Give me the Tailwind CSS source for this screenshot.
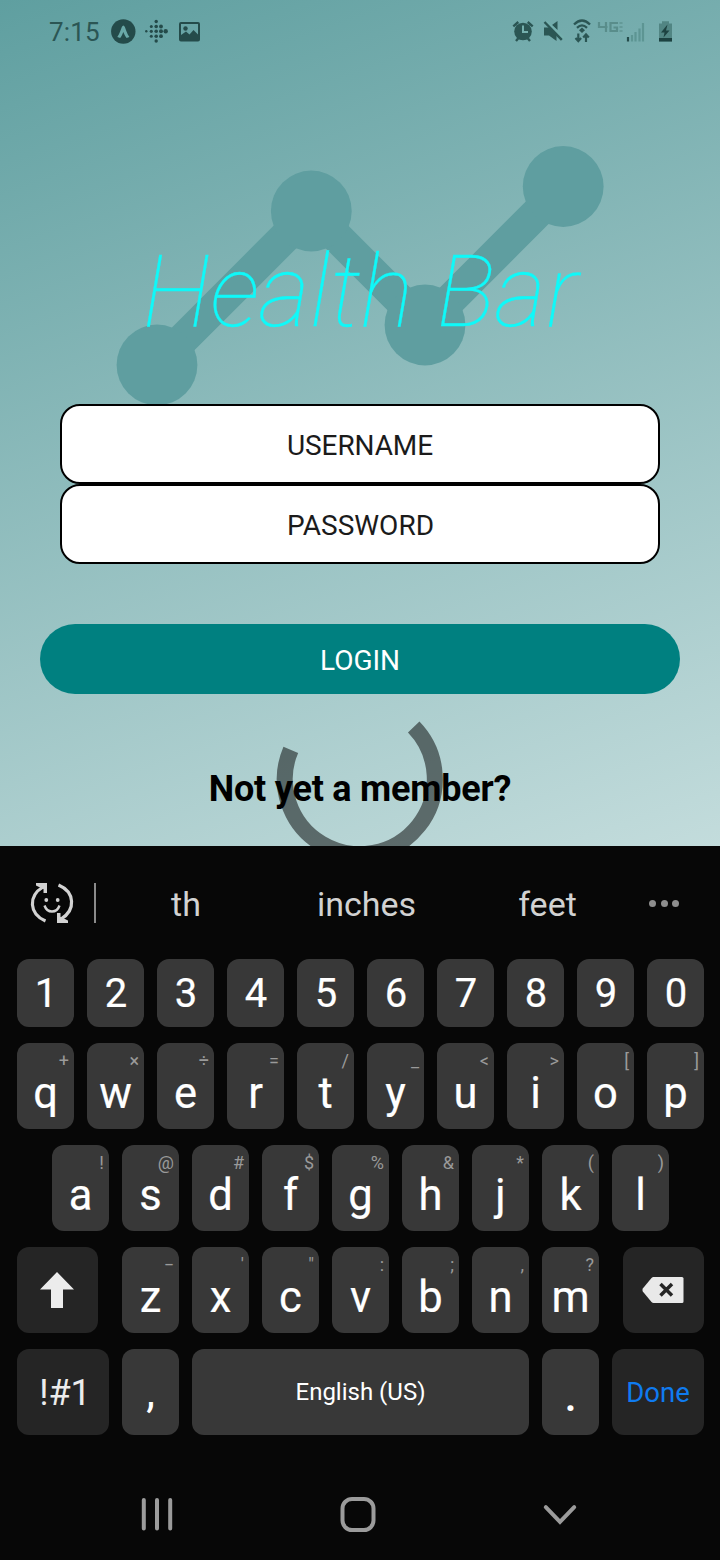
<!DOCTYPE html>
<html lang="en">
<head>
<meta charset="utf-8">
<title>Health Bar</title>
<script src="https://cdn.jsdelivr.net/npm/@tailwindcss/browser@4"></script>
</head>
<body class="w-[720px] h-[1560px] overflow-hidden bg-[#070707] font-['Roboto',sans-serif]">

<main class="relative w-[720px] h-[846px] overflow-hidden bg-[linear-gradient(161deg,#5f9fa0_0px,#c3dcdc_1034px)] flex flex-col">
  <!-- decorative chart and spinner -->
  <svg class="absolute inset-0" width="720" height="846" viewBox="0 0 720 846" fill="none">
    <path d="M157 365L311 211L425 325L563 187" stroke="#5f9ea0" stroke-width="32"/>
    <g fill="#5f9ea0"><circle cx="157" cy="365" r="40.4"/><circle cx="311.300" cy="211" r="40.400"/><circle cx="425" cy="325" r="40.400"/><circle cx="563.200" cy="186.500" r="40.400"/></g>
    <path d="M290.800 749.800A75 75 0 1 0 413.700 727" stroke="#000" stroke-opacity=".5" stroke-width="16"/>
  </svg>

  <header class="relative h-[62px] shrink-0 flex items-center justify-between pl-[49px] pr-[46px] text-[#2b5654]">
    <div class="flex items-center">
      <span class="text-[26px] leading-[62px] w-[61px] pt-[2px] tracking-[0.2px]">7:15</span>
      <svg width="92" height="30" viewBox="110 16 92 30">
        <circle cx="123.300" cy="31.500" r="12.200" fill="#244b4a"/>
        <path d="M117.300 37C119.600 33.500 120.800 30 121.800 27Q123.300 24 124.900 27C125.900 30 127 33.500 129.400 37L126.600 38C125 36 124.200 34 123.300 32C122.500 34 121.800 36 120.200 38Z" fill="#6aa9a8"/>
        <g fill="#244b4a"><circle cx="146.300" cy="31.300" r="1.200"/><circle cx="151.300" cy="26.500" r="1.500"/><circle cx="151.300" cy="31.300" r="1.600"/><circle cx="151.300" cy="36.200" r="1.500"/><circle cx="156.200" cy="21.500" r="1.700"/><circle cx="156.200" cy="26.500" r="1.800"/><circle cx="156.200" cy="31.300" r="1.800"/><circle cx="156.200" cy="36.200" r="1.800"/><circle cx="156.200" cy="41" r="1.700"/><circle cx="161" cy="26.500" r="1.900"/><circle cx="161" cy="31.300" r="2"/><circle cx="161" cy="36.200" r="1.900"/><circle cx="165.700" cy="31.300" r="2.200"/></g>
        <path fill-rule="evenodd" fill="#244b4a" d="M181 22H198Q200 22 200 24V39.500Q200 41.500 198 41.500H181Q179 41.500 179 39.500V24Q179 22 181 22ZM181 24V35L186 31.500L189.500 34.500L193.500 30L198 34.500V24Z"/>
        <circle cx="185.500" cy="28.500" r="2.200" fill="#244b4a"/>
      </svg>
    </div>
    <svg width="164" height="32" viewBox="510 15 164 32">
      <g fill="#2b5654" stroke="#2b5654">
        <circle cx="523" cy="31.500" r="8.800" stroke="none"/>
        <path d="M513.300 26.300L518.300 22M532.700 26.300L527.700 22M516 41L518.500 38M530 41L527.500 38" fill="none" stroke-width="2.400"/>
        <path d="M523 25.500V32H528" fill="none" stroke="#75b0ae" stroke-width="2"/>
        <path d="M544 27.500H549L556.500 33V41L549 35.500H544ZM552 25L557.500 21V30Z" stroke="none"/>
        <path d="M547 21.500L564 38.500" stroke="#75b0ae" stroke-width="1.800"/>
        <path d="M544.500 22L561.800 39.800" stroke-width="2.400"/>
        <path d="M574 24.500Q582 16.500 590 24.500M577 27.800Q582 23 587 27.800" fill="none" stroke-width="2.300"/>
        <path d="M579 30.300L582 27.500L585 30.300L582 33Z" stroke="none"/>
        <path d="M578.300 33.500V41M575.500 38L578.300 41.200L581.100 38M586 42V35M583.200 37.500L586 34.400L588.800 37.500" fill="none" stroke-width="2.200"/>
      </g>
      <g fill="none" stroke="#598d8b" stroke-width="2.200">
        <path d="M599 22V27H607.500M606 22V32M618 23H610.500V31H617V27.500H613.500"/>
        <path d="M619.500 23H622.500M619.500 27H622.500M619.500 31H622.500" stroke-width="1.600" stroke-opacity=".8"/>
        <path d="M632 35V41.500M635.500 32V41.500M639.500 28.500V41.500M643 23V41.500" stroke="#5d9593" stroke-width="2.200"/>
        <path d="M628 37V41.500" stroke="#244b4a" stroke-width="2.200"/>
      </g>
      <path d="M659 23.500H662V21.300H669V23.500H672V41.500H659Z" fill="#518583"/>
      <path d="M659 38H672V41.500H659Z" fill="#1d4241"/>
      <path d="M667.500 24.500L661 32.500H664.500L663.500 37.500L669.500 30.500H666Z" fill="#1d4241"/>
    </svg>
  </header>

  <h1 class="relative mt-[170px] h-[120px] shrink-0 leading-[120px] pl-[1px] text-center text-[99.500px] font-thin italic text-[#0ff9f9] [-webkit-text-stroke:0.3px_#0ff9f9] whitespace-nowrap">Health Bar</h1>

  <form class="relative mt-[52px] flex flex-col">
    <div class="mx-[60px] h-[80px] rounded-[20px] border-2 border-black bg-white text-center text-[28px] leading-[79px] tracking-[-0.1px] text-[#1b1b1b]">USERNAME</div>
    <div class="mx-[60px] h-[80px] rounded-[20px] border-2 border-black bg-white pl-[1px] text-center text-[28px] leading-[79px] text-[#1b1b1b]">PASSWORD</div>
    <div class="mx-[40px] mt-[60px] h-[70px] rounded-[35px] bg-[#008080] text-center text-[28px] leading-[73px] text-white">LOGIN</div>
  </form>
  <p class="relative mt-[70px] text-center text-[36px] leading-[50px] tracking-[-0.22px] font-bold text-black">Not yet a member?</p>
</main>

<section class="w-[720px] h-[714px] flex flex-col">
  <div class="h-[113px] shrink-0 flex items-center text-[34px] leading-[40px] text-[#d2d2d2]">
    <svg class="ml-[28px]" width="48" height="48" viewBox="28 879 48 48" fill="none" stroke="#d2d2d2" stroke-width="3.200">
      <path d="M45.500 921C29 914 28 896 43 887M58.500 885C75 892 76 910 61 919"/>
      <path d="M36 883H47V893H43.500V889L41 888L36 885.500ZM68 923H57V913H60.500V917L63 918L68 920.500Z" fill="#d2d2d2" stroke="none"/>
      <path d="M44.500 905.500Q46.500 911.500 52 911.500T59.500 905.500" stroke-width="2.400"/>
      <circle cx="46.300" cy="900" r="1.900" fill="#d2d2d2" stroke="none"/><circle cx="57.700" cy="900" r="1.900" fill="#d2d2d2" stroke="none"/>
    </svg>
    <div class="ml-[18px] w-[2px] h-[40px] bg-[#8a8a8a]"></div>
    <span class="w-[180px] text-center pt-[3px]">th</span>
    <span class="w-[181px] text-center pt-[3px]">inches</span>
    <span class="w-[181px] text-center pt-[3px]">feet</span>
    <div class="ml-[11px] mt-[1px] flex gap-[4.500px]">
      <i class="size-[7px] rounded-full bg-[#8e8e8e]"></i><i class="size-[7px] rounded-full bg-[#8e8e8e]"></i><i class="size-[7px] rounded-full bg-[#8e8e8e]"></i>
    </div>
  </div>

  <div class="flex flex-col gap-[16px] pl-[17px] pr-[16px] text-white">
    <div class="flex gap-[13px] h-[68px]" data-digits="1234567890"></div>
    <div class="flex gap-[13px] h-[86px]" data-keys="q+ w× e÷ r= t/ y_ u&lt; i&gt; o[ p]"></div>
    <div class="flex gap-[13px] h-[86px] pl-[35px]" data-keys="a! s@ d# f$ g% h&amp; j* k( l)"></div>
    <div class="flex gap-[24px] h-[86px]">
      <div class="w-[81px] rounded-[12px] bg-[#252525] flex items-center justify-center">
        <svg width="36" height="38" viewBox="0 0 36 38"><path d="M17 1L34 18.500H23V37H11V18.500H0Z" fill="#ececec"/></svg>
      </div>
      <div class="flex gap-[13px]" data-keys="z− x' c&quot; v: b; n, m?"></div>
      <div class="w-[81px] rounded-[12px] bg-[#252525] flex items-center justify-center pr-[1px]">
        <svg width="42" height="28" viewBox="0 0 42 28"><path d="M11.500 1H40Q41.500 1 41.500 2.500V25.500Q41.500 27 40 27H11.500Q10.500 27 9.500 26L0.800 15.500Q0 14 0.800 12.500L9.500 2Q10.500 1 11.500 1Z" fill="#e9e9e9"/><path d="M18.500 8L30 19.500M30 8L18.500 19.500" stroke="#252525" stroke-width="3.500"/></svg>
      </div>
    </div>
    <div class="flex gap-[13px] h-[86px]">
      <div class="w-[92px] rounded-[12px] bg-[#252525] pl-[4px] text-center text-[36px] leading-[88px] text-[#ececec]">!#1</div>
      <div class="w-[57px] rounded-[12px] bg-[#383838] text-center text-[44px] leading-[86px]">,</div>
      <div class="w-[337px] rounded-[12px] bg-[#383838] text-center text-[24px] leading-[87px]">English (US)</div>
      <div class="w-[57px] rounded-[12px] bg-[#383838] text-center text-[44px] leading-[86px] pt-[4px] font-medium">.</div>
      <div class="w-[92px] rounded-[12px] bg-[#252525] text-center text-[27.500px] leading-[88px] text-[#0f7bf0]">Done</div>
    </div>
  </div>

  <nav class="h-[124px] pt-[32px]">
    <svg width="720" height="92" viewBox="0 1466.500 720 92" fill="none" stroke="#9b9b9b" stroke-width="4" stroke-linecap="round">
      <path d="M143.800 1499.500V1528M157 1499.500V1528M170.200 1499.500V1528"/>
      <rect x="342.500" y="1498.500" width="31" height="31" rx="9.500"/>
      <path d="M545.800 1506.700L560 1521.300L574.200 1506.700"/>
    </svg>
  </nav>
</section>

<script>
  const esc = c => c.replace('&', '&amp;').replace('<', '&lt;');
  document.querySelectorAll('[data-digits]').forEach(row => {
    row.innerHTML = [...row.dataset.digits].map(d =>
      `<div class="w-[57px] rounded-[12px] bg-[#383838] pl-[1px] text-center text-[40px] leading-[70px] h-[68px] [-webkit-text-stroke:0.2px_white]">${d}</div>`).join('');
  });
  document.querySelectorAll('[data-keys]').forEach(row => {
    row.innerHTML = row.dataset.keys.split(' ').map(k =>
      `<div class="relative w-[57px] h-[86px] rounded-[12px] bg-[#383838] text-center text-[43.500px] leading-[86px] pt-[8px] [-webkit-text-stroke:0.2px_white]"><span class="absolute top-0 right-[5px] text-[18px] leading-[36px] text-[#9a9a9a] [-webkit-text-stroke:0px]">${esc(k[1])}</span>${k[0]}</div>`).join('');
  });
</script>
</body>
</html>
